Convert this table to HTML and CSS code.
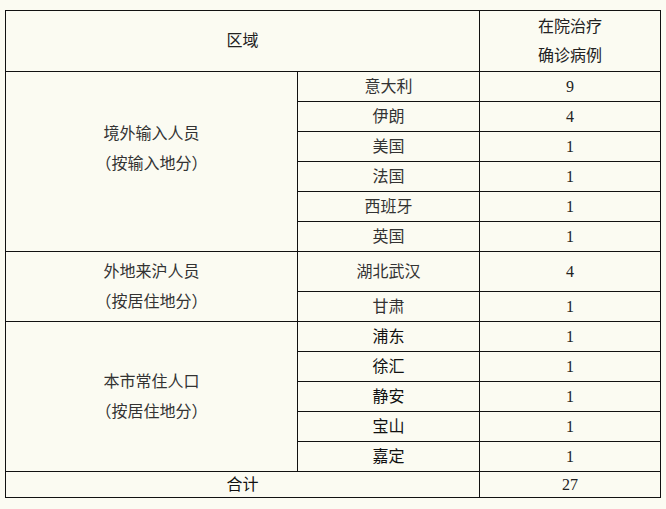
FILE: index.html
```html
<!DOCTYPE html>
<html lang="zh-CN">
<head>
<meta charset="utf-8">
<title>在院治疗确诊病例</title>
<link rel="stylesheet" href="styles.css">
</head>
<body>
<table class="stats">
  <colgroup>
    <col class="c-area">
    <col class="c-sub">
    <col class="c-num">
  </colgroup>
  <tr class="head">
    <td colspan="2">区域</td>
    <td class="two">在院治疗<br>确诊病例</td>
  </tr>
  <tr class="row">
    <td rowspan="6" class="group first">境外输入人员<br>（按输入地分）</td>
    <td>意大利</td><td class="num">9</td>
  </tr>
  <tr class="row"><td>伊朗</td><td class="num">4</td></tr>
  <tr class="row"><td>美国</td><td class="num">1</td></tr>
  <tr class="row"><td>法国</td><td class="num">1</td></tr>
  <tr class="row"><td>西班牙</td><td class="num">1</td></tr>
  <tr class="row"><td>英国</td><td class="num">1</td></tr>
  <tr class="row tall">
    <td rowspan="2" class="group">外地来沪人员<br>（按居住地分）</td>
    <td>湖北武汉</td><td class="num">4</td>
  </tr>
  <tr class="row"><td>甘肃</td><td class="num">1</td></tr>
  <tr class="row">
    <td rowspan="5" class="group">本市常住人口<br>（按居住地分）</td>
    <td class="dark">浦东</td><td class="num dark">1</td>
  </tr>
  <tr class="row"><td class="dark">徐汇</td><td class="num dark">1</td></tr>
  <tr class="row"><td class="dark">静安</td><td class="num">1</td></tr>
  <tr class="row"><td class="dark">宝山</td><td class="num dark">1</td></tr>
  <tr class="row"><td class="dark">嘉定</td><td class="num dark">1</td></tr>
  <tr class="total">
    <td colspan="2" class="dark">合计</td><td class="num">27</td>
  </tr>
</table>
</body>
</html>
```

FILE: styles.css
```css
html, body {
  margin: 0;
  padding: 0;
  background: #fbfbf2;
}
body {
  padding: 10px 0 0 5px;
  font-family: "Liberation Serif", "Noto Sans CJK SC", serif;
  font-size: 16px;
  color: #333;
}
.stats {
  border-collapse: collapse;
  table-layout: fixed;
  width: 655px;
}
.c-area { width: 292px; }
.c-sub { width: 182px; }
.c-num { width: 181px; }
.stats td {
  border: 1px solid #111;
  padding: 0;
  text-align: center;
  vertical-align: middle;
  line-height: 20px;
}
.head td {
  height: 60px;
  color: #222;
}
.head td.two {
  line-height: 29px;
}
.row td { height: 29px; }
.row.tall td { height: 39px; }
.total td { height: 25px; }
.stats td.group {
  line-height: 30px;
  height: auto;
}
.stats td.group.first {
  padding-bottom: 26px;
}
.dark { color: #111; }
.num { color: #222; }
```
